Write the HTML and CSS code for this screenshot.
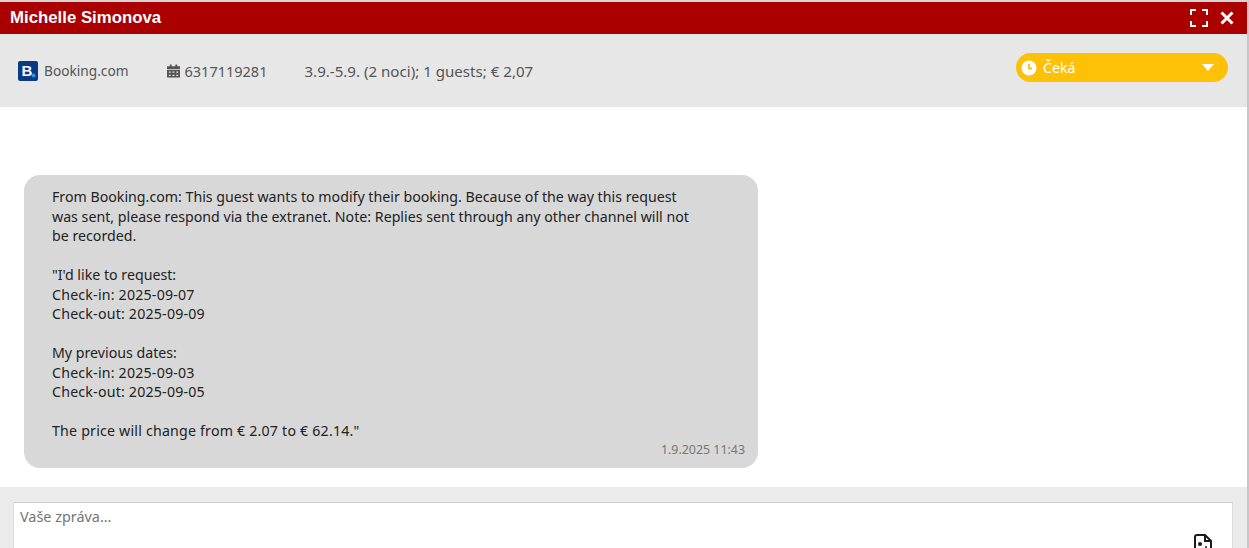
FILE: index.html
```html
<!DOCTYPE html>
<html lang="cs">
<head>
  <meta charset="UTF-8">
  <meta name="viewport" content="width=device-width, initial-scale=1.0">
  <title>Michelle Simonova</title>
  <link rel="stylesheet" href="styles.css">
</head>
<body>
  <div class="window">
    <div class="header">
      <span class="guest-name">Michelle Simonova</span>
      <div class="header-icons">
        <svg class="icon-btn" viewBox="0 0 18 18" width="18" height="18" fill="none" stroke="#fff" stroke-width="2">
          <path d="M1 6V1h5M12 1h5v5M17 12v5h-5M6 17H1v-5"/>
        </svg>
        <svg class="icon-btn" viewBox="0 0 14 14" width="14" height="14" fill="none" stroke="#fff" stroke-width="3">
          <path d="M1.5 1.5l11 11M12.500 1.500l-11 11"/>
        </svg>
      </div>
    </div>

    <div class="info-bar">
      <div class="info-item source">
        <svg class="booking-logo" viewBox="0 0 20 20" width="20" height="20">
          <rect width="20" height="20" rx="2" fill="#0b3a82"/>
          <text x="3.500" y="15" class="booking-b">B</text>
          <circle cx="15.500" cy="14.500" r="2" fill="#1e9be8"/>
        </svg>
        <span>Booking.com</span>
      </div>
      <div class="info-item reservation">
        <svg viewBox="0 0 14 14" width="13" height="14" fill="#555">
          <path d="M3 0h2v2h4V0h2v2h3v3H0V2h3zM0 6h14v8H0zM2 7.500v1.500h2V7.500zm4 0v1.500h2V7.500zm4 0v1.500h2V7.500zM2 11v1.500h2V11zm4 0v1.500h2V11zm4 0v1.500h2V11z" fill-rule="evenodd"/>
        </svg>
        <span>6317119281</span>
      </div>
      <div class="info-item stay">3.9.-5.9. (2 noci); 1 guests; € 2,07</div>
      <div class="status-pill">
        <svg viewBox="0 0 16 16" width="16" height="16">
          <circle cx="8" cy="8" r="7.500" fill="#fff"/>
          <path d="M8 4v4.500h3" fill="none" stroke="#ffc107" stroke-width="1.800"/>
        </svg>
        <span class="status-label">Čeká</span>
        <span class="status-caret"></span>
      </div>
    </div>

    <div class="messages">
      <div class="bubble">
        <div class="bubble-text">From Booking.com: This guest wants to modify their booking. Because of the way this request was sent, please respond via the extranet. Note: Replies sent through any other channel will not be recorded.

"I'd like to request:
<span class="num-line">Check-in: 2025-09-07</span>
<span class="num-line">Check-out: 2025-09-09</span>

My previous dates:
<span class="num-line">Check-in: 2025-09-03</span>
<span class="num-line">Check-out: 2025-09-05</span>

<span class="num-line">The price will change from € 2.07 to € 62.14."</span></div>
        <div class="bubble-time">1.9.2025 11:43</div>
      </div>
    </div>

    <div class="composer">
      <div class="composer-box">
        <span class="placeholder">Vaše zpráva...</span>
        <svg class="attach-icon" viewBox="0 0 18 22" width="18" height="22" fill="none" stroke="#1a1a1a" stroke-width="2">
          <path d="M3 1h8l6 6v12a2 2 0 0 1-2 2H3a2 2 0 0 1-2-2V3a2 2 0 0 1 2-2z"/>
          <path d="M11 1v6h6"/>
          <circle cx="6" cy="10" r="2" fill="#1a1a1a" stroke="none"/>
          <circle cx="12" cy="13" r="1" fill="#1a1a1a" stroke="none"/>
        </svg>
      </div>
    </div>
  </div>
</body>
</html>
```

FILE: styles.css
```css
html, body {
  margin: 0;
  height: 100%;
  overflow: hidden;
}
body {
  background: #fff;
  font-family: "Noto Sans", "DejaVu Sans", sans-serif;
  color: #222;
}
.window {
  height: 548px;
  display: flex;
  flex-direction: column;
  border-top: 2px solid #d6d6d6;
  border-right: 2px solid #c4c8cc;
  box-sizing: border-box;
}
.header {
  height: 32px;
  flex: none;
  background: #aa0000;
  display: flex;
  align-items: center;
  justify-content: space-between;
  padding: 0 13px 0 10px;
}
.guest-name {
  color: #fff;
  font-family: "Liberation Sans", Arial, sans-serif;
  font-size: 16.800px;
  font-weight: bold;
}
.header-icons {
  display: flex;
  align-items: center;
  gap: 12px;
}
.info-bar {
  height: 73px;
  flex: none;
  background: #e7e7e7;
  display: flex;
  align-items: center;
  padding: 0 19px 0 18px;
  font-size: 14px;
  color: #555;
}
.info-item {
  display: flex;
  align-items: center;
}
.source {
  gap: 6px;
  margin-right: 38px;
  font-size: 13.700px;
}
.reservation {
  gap: 5px;
  margin-right: 37px;
  font-size: 14.500px;
}
.stay {
  font-size: 15.100px;
}
.booking-b {
  font-family: "Liberation Sans", Arial, sans-serif;
  font-size: 15px;
  font-weight: bold;
  fill: #fff;
}
.status-pill {
  margin-left: auto;
  margin-top: -6px;
  width: 212px;
  height: 29px;
  box-sizing: border-box;
  background: #ffc107;
  border-radius: 15px;
  display: flex;
  align-items: center;
  padding: 0 14px 0 5px;
  color: #fff;
  font-size: 14.200px;
}
.status-label {
  margin-left: 6px;
}
.status-caret {
  margin-left: auto;
  width: 0;
  height: 0;
  border-left: 6px solid transparent;
  border-right: 6px solid transparent;
  border-top: 7px solid #fff;
}
.messages {
  flex: 1;
  padding: 68px 0 19px 24px;
}
.bubble {
  width: 734px;
  height: 293px;
  box-sizing: border-box;
  background: #d8d8d8;
  border-radius: 16px;
  padding: 12px 13px 0 28px;
  display: flex;
  flex-direction: column;
}
.bubble-text {
  width: 645px;
  font-size: 14.200px;
  line-height: 19.500px;
  white-space: pre-line;
  color: #222;
}
.num-line {
  letter-spacing: 0.200px;
}
.bubble-time {
  margin-top: auto;
  padding-bottom: 12px;
  text-align: right;
  font-size: 12.400px;
  color: #777;
}
.composer {
  height: 61px;
  flex: none;
  background: #ebebeb;
  padding: 15px 14px 0 13px;
  box-sizing: border-box;
}
.composer-box {
  height: 60px;
  background: #fff;
  border-top: 1px solid #ccc;
  border-left: 1px solid #ddd;
  border-right: 1px solid #ddd;
  display: flex;
  justify-content: space-between;
  padding: 4px 20px 0 6px;
}
.placeholder {
  font-size: 14.400px;
  color: #757575;
}
.attach-icon {
  margin-top: 27px;
  flex: none;
}
```
